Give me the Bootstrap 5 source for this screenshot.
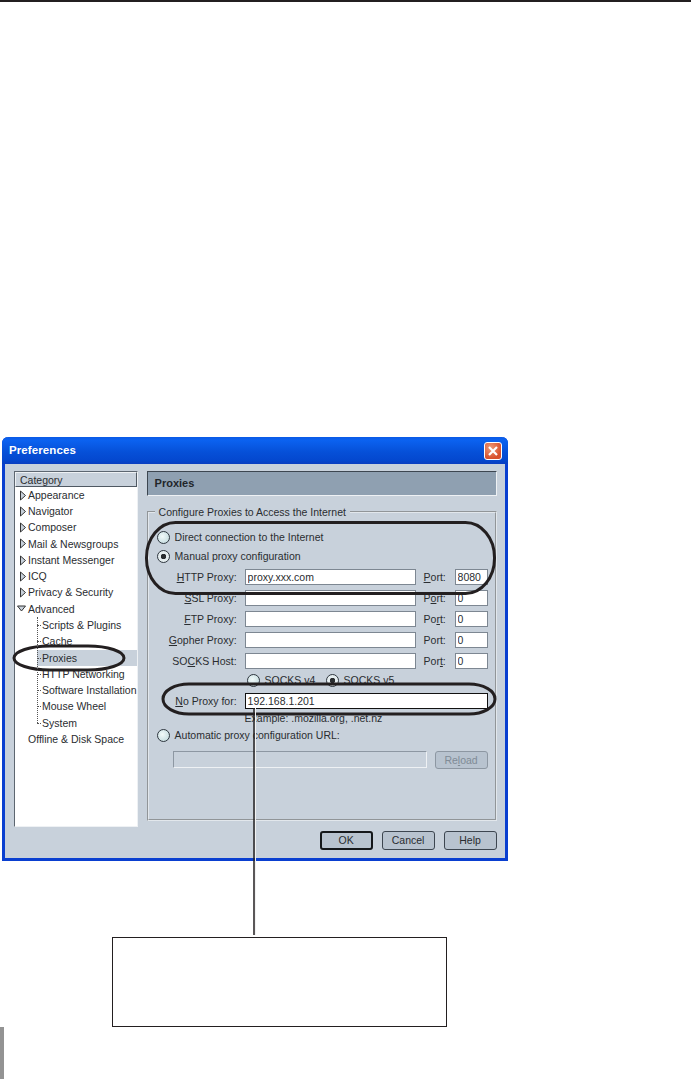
<!DOCTYPE html>
<html lang="en">
<head>
  <meta charset="UTF-8">
  <title>Preferences - Proxies</title>
  <link href="https://cdn.jsdelivr.net/npm/bootstrap@5.3.0/dist/css/bootstrap.min.css" rel="stylesheet">
  <style>
    body { background: #fff; margin: 0; width: 691px; height: 1079px; overflow: hidden; position: relative;
      font-family: "Liberation Sans", Arial, sans-serif; font-size: 10.5px; color: #2a2d30; line-height: 1; }
    .top-rule { height: 2px; background: #231f20; }
    /* dialog */
    .pref-win { width: 506px; height: 424px; margin: 435px 0 0 2px; border: 3px solid #0a3fd0; border-top: 0;
      border-radius: 6px 6px 0 0; background: #c8d1db; }
    .pref-title { height: 27px; margin: 0 -3px; padding: 0 6px 0 7px; border-radius: 6px 6px 0 0; color: #fff;
      background: linear-gradient(#0a5ae6 0, #0b62f0 12%, #0650d8 55%, #0448cf 85%, #0a3ec0 100%); }
    .pref-title b { font-size: 11.5px; letter-spacing: .1px; }
    .close-x { width: 18px; height: 18px; border: 1px solid #fff; border-radius: 3px;
      background: radial-gradient(circle at 35% 30%, #ee9a78, #d8502c 70%); }
    .pref-body { padding: 7px 11px 0 9px; gap: 9px; }
    /* tree */
    .cat-box { width: 124px; height: 356px; background: #fff; border: 1px solid; border-color: #5d6670 #eef1f4 #eef1f4 #5d6670; }
    .cat-head { height: 15px; background: #c8d1db; border: 1px solid; border-color: #eef1f4 #4f5862 #4f5862 #eef1f4; padding: 2px 0 0 4px; }
    .tree-row { height: 16.27px; padding-left: 13px; white-space: nowrap; }
    .tree-arrow { width: 6px; height: 11px; margin-left: -8px; margin-right: 2px; flex: none; }
    .tree-arrow-open { width: 9px; margin-left: -11px; }
    .tree-kids { margin-left: 22px; position: relative; }
    .tree-kids::before { content: ""; position: absolute; left: 0; top: 0; height: 106px; border-left: 1px dotted #555; z-index: 1; }
    .tree-kid { height: 16.27px; padding-left: 5px; white-space: nowrap; position: relative; }
    .tree-kid::before { content: ""; width: 4px; border-top: 1px dotted #555; position: absolute; left: 0; top: 8px; }
    .tree-kid.sel { background: #c8d1db; }
    /* right side */
    .pxy-side { width: 350px; }
    .pxy-head { height: 25px; padding-left: 7px; font-weight: 700; font-size: 11px; color: #22262a; background: #8fa0b1;
      border: 1px solid; border-color: #3d4650 #eef1f4 #eef1f4 #3d4650; }
    .pxy-group { height: 314px; margin: 11px 0 0; padding: 11px 7px 0 8px; border: 2px groove #e2e7ec; min-width: 0; }
    .pxy-group legend { float: none; width: auto; font-size: 10.5px; margin: 0 0 0 -2px; padding: 0 4px; line-height: 10px; }
    .pxy-line { height: 19px; }
    .pxy-field { height: 16px; margin-top: 5px; }
    .pxy-field.first { margin-top: 3px; }
    .pxy-field.tight { margin-top: 4px; }
    .pxy-label { width: 80px; margin-right: 8px; text-align: right; flex: none; }
    .pxy-radio.form-check-input { width: 13px; height: 13px; margin: 0 5px 0 0; flex: none; float: none; border: 1px solid #2f373f;
      background: radial-gradient(circle at 40% 40%, #f2fafa, #c7dde0 80%); }
    .pxy-radio.form-check-input:checked { background: radial-gradient(circle, #2a2d30 0 2.5px, #e6eef0 3px); border-color: #2f373f; }
    .pxy-input.form-control { height: 16px; min-height: 0; padding: 0 2px; font-size: 10.5px; line-height: 1; color: #2a2d30; border-radius: 0;
      border: 1px solid; border-color: #4f5862 #eef1f4 #eef1f4 #4f5862; background: #fff; outline: 1px solid #7d8792; outline-offset: -1px; }
    .pxy-host { width: 171px; flex: none; }
    .pxy-port-label { width: 31px; margin-left: 8px; flex: none; }
    .pxy-port { width: 33px; flex: none; }
    .pxy-socks { height: 18px; margin-top: 2px; padding-left: 90px; }
    .pxy-socks-item { width: 79px; }
    .pxy-noproxy { width: 243px; flex: none; }
    .pxy-noproxy.form-control { outline-color: #111; }
    .pxy-example { height: 15px; margin-top: 2px; padding-left: 88px; }
    .pxy-auto { height: 18px; }
    .pxy-url.form-control { width: 254px; height: 17px; flex: none; margin: 7px 0 0 16px; background: #c8d1db; border-color: #8d97a2 #eef1f4 #eef1f4 #8d97a2; outline: 0; }
    .pxy-btn.btn { height: 18px; padding: 0; font-size: 10.5px; line-height: 1; color: #2a2d30; background: #b8c3cf; border: 1px solid #3d4650; border-radius: 3px; --bs-btn-border-radius: 3px; }
    .pxy-btn.off { width: 53px; margin: 7px 0 0 8px; color: #808b96; border-color: #8d97a2; opacity: 1; }
    .pxy-foot { gap: 9px; margin-top: 10px; }
    .pxy-foot .pxy-btn { width: 53px; height: 19px; }
    .pxy-foot .pxy-ok { border-width: 2px; border-color: #15181b; }
    /* notes under the picture */
    .note-box { width: 335px; height: 90px; margin: 76px 0 0 112px; border: 1.5px solid #231f20; }
    .side-tab { width: 4px; height: 52px; background: #939393; }
    .mark-up { position: absolute; left: 0; top: 0; pointer-events: none; }
  </style>
</head>
<body>
  <div class="top-rule"></div>

  <div class="pref-win">
    <div class="pref-title d-flex align-items-center justify-content-between">
      <b>Preferences</b>
      <div class="close-x d-flex align-items-center justify-content-center">
        <svg width="10" height="10" viewBox="0 0 10 10"><path d="M1 1 9 9M9 1 1 9" stroke="#fff" stroke-width="2.2"/></svg>
      </div>
    </div>
    <div class="pref-body d-flex">
      <div class="cat-box">
        <div class="cat-head">Category</div>
        <div class="tree-row d-flex align-items-center"><svg class="tree-arrow" viewBox="0 0 6 11"><path d="M.5 1 5.5 5.5.5 10Z" fill="#c8d1db" stroke="#333"/></svg>Appearance</div>
        <div class="tree-row d-flex align-items-center"><svg class="tree-arrow" viewBox="0 0 6 11"><path d="M.5 1 5.5 5.5.5 10Z" fill="#c8d1db" stroke="#333"/></svg>Navigator</div>
        <div class="tree-row d-flex align-items-center"><svg class="tree-arrow" viewBox="0 0 6 11"><path d="M.5 1 5.5 5.5.5 10Z" fill="#c8d1db" stroke="#333"/></svg>Composer</div>
        <div class="tree-row d-flex align-items-center"><svg class="tree-arrow" viewBox="0 0 6 11"><path d="M.5 1 5.5 5.5.5 10Z" fill="#c8d1db" stroke="#333"/></svg>Mail &amp; Newsgroups</div>
        <div class="tree-row d-flex align-items-center"><svg class="tree-arrow" viewBox="0 0 6 11"><path d="M.5 1 5.5 5.5.5 10Z" fill="#c8d1db" stroke="#333"/></svg>Instant Messenger</div>
        <div class="tree-row d-flex align-items-center"><svg class="tree-arrow" viewBox="0 0 6 11"><path d="M.5 1 5.5 5.5.5 10Z" fill="#c8d1db" stroke="#333"/></svg>ICQ</div>
        <div class="tree-row d-flex align-items-center"><svg class="tree-arrow" viewBox="0 0 6 11"><path d="M.5 1 5.5 5.5.5 10Z" fill="#c8d1db" stroke="#333"/></svg>Privacy &amp; Security</div>
        <div class="tree-row d-flex align-items-center"><svg class="tree-arrow tree-arrow-open" viewBox="0 0 9 11"><path d="M.5 3 8.5 3 4.5 8Z" fill="#c8d1db" stroke="#333"/></svg>Advanced</div>
        <div class="tree-kids">
          <div class="tree-kid d-flex align-items-center">Scripts &amp; Plugins</div>
          <div class="tree-kid d-flex align-items-center">Cache</div>
          <div class="tree-kid sel d-flex align-items-center">Proxies</div>
          <div class="tree-kid d-flex align-items-center">HTTP Networking</div>
          <div class="tree-kid d-flex align-items-center">Software Installation</div>
          <div class="tree-kid d-flex align-items-center">Mouse Wheel</div>
          <div class="tree-kid d-flex align-items-center">System</div>
        </div>
        <div class="tree-row d-flex align-items-center">Offline &amp; Disk Space</div>
      </div>

      <div class="pxy-side">
        <div class="pxy-head d-flex align-items-center">Proxies</div>
        <fieldset class="pxy-group">
          <legend>Configure Proxies to Access the Internet</legend>
          <div class="pxy-line d-flex align-items-center"><input class="form-check-input pxy-radio" type="radio" name="mode">Direct connection to the Internet</div>
          <div class="pxy-line d-flex align-items-center"><input class="form-check-input pxy-radio" type="radio" name="mode" checked>Manual proxy configuration</div>
          <div class="pxy-field first d-flex align-items-center"><span class="pxy-label"><u>H</u>TTP Proxy:</span><input class="form-control pxy-input pxy-host" value="proxy.xxx.com"><span class="pxy-port-label"><u>P</u>ort:</span><input class="form-control pxy-input pxy-port" value="8080"></div>
          <div class="pxy-field d-flex align-items-center"><span class="pxy-label"><u>S</u>SL Proxy:</span><input class="form-control pxy-input pxy-host"><span class="pxy-port-label">P<u>o</u>rt:</span><input class="form-control pxy-input pxy-port" value="0"></div>
          <div class="pxy-field d-flex align-items-center"><span class="pxy-label"><u>F</u>TP Proxy:</span><input class="form-control pxy-input pxy-host"><span class="pxy-port-label">Po<u>r</u>t:</span><input class="form-control pxy-input pxy-port" value="0"></div>
          <div class="pxy-field d-flex align-items-center"><span class="pxy-label"><u>G</u>opher Proxy:</span><input class="form-control pxy-input pxy-host"><span class="pxy-port-label">Port:</span><input class="form-control pxy-input pxy-port" value="0"></div>
          <div class="pxy-field d-flex align-items-center"><span class="pxy-label">SO<u>C</u>KS Host:</span><input class="form-control pxy-input pxy-host"><span class="pxy-port-label">Por<u>t</u>:</span><input class="form-control pxy-input pxy-port" value="0"></div>
          <div class="pxy-socks d-flex align-items-center">
            <div class="pxy-socks-item d-flex align-items-center"><input class="form-check-input pxy-radio" type="radio" name="socks">SOCKS v4</div>
            <div class="pxy-socks-item d-flex align-items-center"><input class="form-check-input pxy-radio" type="radio" name="socks" checked>SOCKS v5</div>
          </div>
          <div class="pxy-field tight d-flex align-items-center"><span class="pxy-label"><u>N</u>o Proxy for:</span><input class="form-control pxy-input pxy-noproxy" value="192.168.1.201"></div>
          <div class="pxy-example d-flex align-items-center">Example: .mozilla.org, .net.nz</div>
          <div class="pxy-auto d-flex align-items-center"><input class="form-check-input pxy-radio" type="radio" name="mode">Automatic proxy configuration URL:</div>
          <div class="d-flex align-items-start"><input class="form-control pxy-input pxy-url" disabled><button class="btn pxy-btn off" disabled>Re<u>l</u>oad</button></div>
        </fieldset>
        <div class="pxy-foot d-flex justify-content-end">
          <button class="btn pxy-btn pxy-ok">OK</button>
          <button class="btn pxy-btn">Cancel</button>
          <button class="btn pxy-btn">Help</button>
        </div>
      </div>
    </div>
  </div>

  <div class="note-box"></div>
  <div class="side-tab"></div>

  <!-- hand drawn marks over the dialog -->
  <svg class="mark-up" width="691" height="1079" viewBox="0 0 691 1079" fill="none">
    <rect x="146.5" y="522.5" width="348" height="71" rx="29" ry="35" stroke="#231f20" stroke-width="3"/>
    <rect x="14" y="646" width="110" height="24" rx="36" ry="12" stroke="#231f20" stroke-width="3"/>
    <rect x="163" y="684" width="332" height="30" rx="26" ry="15" stroke="#231f20" stroke-width="3"/>
    <path d="M254 708V935" stroke="#231f20" stroke-width="1.5"/>
    <path d="M255.5 708V935" stroke="#f2f2f2" stroke-width="1"/>
  </svg>

  <script src="https://cdn.jsdelivr.net/npm/bootstrap@5.3.0/dist/js/bootstrap.bundle.min.js"></script>
</body>
</html>
